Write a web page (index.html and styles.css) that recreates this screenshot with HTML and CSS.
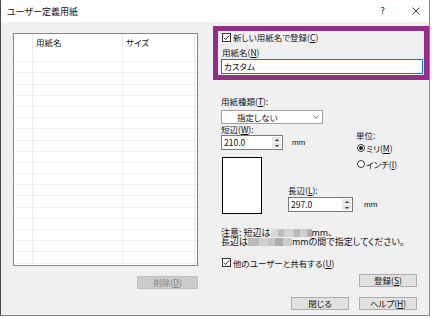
FILE: index.html
```html
<!DOCTYPE html>
<html lang="ja">
  <head>
    <meta charset="UTF-8" />
    <title>ユーザー定義用紙</title>
    <link rel="stylesheet" href="styles.css">
  </head>
  <body>
    <div class="window">
      <div class="titlebar">
        <span class="title">ユーザー定義用紙</span>
        <span class="title-btns">
          <span class="help-btn">?</span>
          <svg class="close-btn" width="8" height="8" viewBox="0 0 8 8">
            <path d="M0.5 0.5 L7.5 7.5 M7.5 0.5 L0.5 7.5" stroke="#222" stroke-width="0.9" fill="none" />
          </svg>
        </span>
      </div>

      <div class="dialog">
        <div class="left-pane">
          <div class="paper-list">
            <div class="list-head"><span></span><span>用紙名</span><span>サイズ</span></div>
            <div class="list-row"><span></span><span></span><span></span></div>
            <div class="list-row"><span></span><span></span><span></span></div>
            <div class="list-row"><span></span><span></span><span></span></div>
            <div class="list-row"><span></span><span></span><span></span></div>
            <div class="list-row"><span></span><span></span><span></span></div>
            <div class="list-row"><span></span><span></span><span></span></div>
            <div class="list-row"><span></span><span></span><span></span></div>
            <div class="list-row"><span></span><span></span><span></span></div>
            <div class="list-row"><span></span><span></span><span></span></div>
            <div class="list-row"><span></span><span></span><span></span></div>
            <div class="list-row"><span></span><span></span><span></span></div>
            <div class="list-row"><span></span><span></span><span></span></div>
            <div class="list-row"><span></span><span></span><span></span></div>
            <div class="list-row"><span></span><span></span><span></span></div>
            <div class="list-row"><span></span><span></span><span></span></div>
            <div class="list-row"><span></span><span></span><span></span></div>
            <div class="list-row"><span></span><span></span><span></span></div>
            <div class="list-row"><span></span><span></span><span></span></div>
            <div class="list-row"><span></span><span></span><span></span></div>
          </div>
          <button class="btn btn-delete" disabled>削除(<u>D</u>)</button>
        </div>

        <div class="right-pane">
          <div class="highlight">
            <div class="check">
              <svg class="checkbox" width="9" height="9" viewBox="0 0 9 9">
                <rect x="0.5" y="0.5" width="8" height="8" fill="#fff" stroke="#333" />
                <path d="M1.8 4.6 L3.6 6.5 L7.2 2.4" stroke="#111" stroke-width="0.9" fill="none" />
              </svg>
              <span>新しい用紙名で登録(<u>C</u>)</span>
            </div>
            <div class="name-label">用紙名(<u>N</u>)</div>
            <div class="textbox">カスタム</div>
          </div>

          <div class="form">
            <div class="type-label">用紙種類(<u>T</u>):</div>
            <div class="combo">
              <span>指定しない</span>
              <svg class="chevron" width="6" height="4" viewBox="0 0 6 4">
                <path d="M0.5 0.8 L3 3.2 L5.5 0.8" stroke="#444" stroke-width="0.8" fill="none" />
              </svg>
            </div>

            <div class="size-grid">
              <div class="short-label">短辺(<u>W</u>):</div>
              <div class="short-row">
                <div class="spin spin-short">
                  <span class="spin-text">210.0</span>
                  <span class="spin-btns"><span class="up"></span><span class="down"></span></span>
                </div>
                <span class="mm">mm</span>
              </div>

              <div class="unit-group">
                <div class="unit-label">単位:</div>
                <div class="radio">
                  <svg width="8" height="8" viewBox="0 0 8 8">
                    <circle cx="4" cy="4" r="3.5" fill="#fff" stroke="#333" />
                    <circle cx="4" cy="4" r="2" fill="#222" />
                  </svg>
                  <span>ミリ(<u>M</u>)</span>
                </div>
                <div class="radio">
                  <svg width="8" height="8" viewBox="0 0 8 8">
                    <circle cx="4" cy="4" r="3.5" fill="#fff" stroke="#333" />
                  </svg>
                  <span>インチ(<u>I</u>)</span>
                </div>
              </div>

              <div class="preview"></div>

              <div class="long-block">
                <div class="long-label">長辺(<u>L</u>):</div>
                <div class="long-row">
                  <div class="spin spin-long">
                    <span class="spin-text">297.0</span>
                    <span class="spin-btns"><span class="up"></span><span class="down"></span></span>
                  </div>
                  <span class="mm mm-long">mm</span>
                </div>
              </div>
            </div>

            <p class="note">
              注意: 短辺は<span class="masked masked-1"></span>mm、<br>
              長辺は<span class="masked masked-2"></span>mmの間で指定してください。
            </p>

            <div class="check share">
              <svg class="checkbox" width="9" height="9" viewBox="0 0 9 9">
                <rect x="0.5" y="0.5" width="8" height="8" fill="#fff" stroke="#333" />
                <path d="M1.8 4.6 L3.6 6.5 L7.2 2.4" stroke="#111" stroke-width="0.9" fill="none" />
              </svg>
              <span>他のユーザーと共有する(<u>U</u>)</span>
            </div>

            <div class="btn-row register-row">
              <button class="btn">登録(<u>S</u>)</button>
            </div>
            <div class="btn-row footer-row">
              <button class="btn">閉じる</button>
              <button class="btn">ヘルプ(<u>H</u>)</button>
            </div>
          </div>
        </div>
      </div>
    </div>
  </body>
</html>
```

FILE: styles.css
```css
body {
  background-color: #fff;
  color: #111;
  font-family: "Noto Sans CJK JP", "Noto Sans", sans-serif;
  font-feature-settings: "palt";
  font-size: 8.5px;
  margin: 0;
}
u {
  text-decoration-thickness: 1px;
  text-underline-offset: 1px;
}
.window {
  background-color: #f0f0f0;
  border: 1px solid #868686;
  border-left-color: #4a4a4a;
  border-top: none;
  box-sizing: border-box;
  height: 316px;
  width: 430px;
}
.titlebar {
  align-items: center;
  background-color: #fff;
  display: flex;
  height: 22px;
  justify-content: space-between;
}
.title {
  font-size: 9px;
  margin-left: 6px;
  margin-top: 1px;
}
.title-btns {
  align-items: center;
  display: flex;
  margin-right: 9px;
}
.help-btn {
  color: #222;
  font-family: "DejaVu Sans", sans-serif;
  font-size: 9px;
  margin-right: 27px;
}
.close-btn {
  display: block;
}
.dialog {
  display: flex;
  padding: 4px 0 0 12px;
}
.left-pane {
  align-items: flex-end;
  display: flex;
  flex-direction: column;
  margin-top: 7px;
  width: 185px;
}
.paper-list {
  background-color: #fff;
  border: 1px solid #828790;
  box-sizing: border-box;
  height: 233px;
  overflow: hidden;
  width: 185px;
}
.list-head,
.list-row {
  display: grid;
  grid-template-columns: 19px 90px 72px;
}
.list-head {
  height: 17px;
  line-height: 17px;
}
.list-head span {
  border-right: 1px solid #e5e5e5;
  box-sizing: border-box;
  padding-left: 3px;
}
.list-row {
  border-bottom: 1px solid #efefef;
  box-sizing: border-box;
  height: 11.2px;
}
.list-row span {
  border-right: 1px solid #efefef;
  box-sizing: border-box;
}
.btn {
  background-color: #e1e1e1;
  border: 1px solid #adadad;
  color: #111;
  font-family: inherit;
  font-feature-settings: "palt";
  font-size: 8.5px;
  height: 13px;
  line-height: 11px;
  padding: 0;
  width: 58px;
}
.btn-delete {
  background-color: #cccccc;
  border-color: #bfbfbf;
  color: #838383;
  margin-top: 10px;
  width: 61px;
}
.right-pane {
  margin-left: 15px;
  width: 217px;
}
.highlight {
  border: 5px solid #992a8b;
  box-sizing: border-box;
  height: 54px;
}
.check {
  align-items: center;
  display: flex;
  height: 12px;
  margin-left: 4px;
}
.checkbox {
  display: block;
  margin-right: 2px;
}
.name-label {
  line-height: 11px;
  margin: 4px 0 0 4px;
}
.textbox {
  background-color: #fff;
  border: 1px solid #0078d7;
  box-sizing: border-box;
  height: 15px;
  line-height: 13px;
  margin: 1px 0 0 3px;
  padding-left: 2px;
  width: 202px;
}
.form {
  padding: 0 12px 0 8px;
}
.type-label {
  line-height: 12px;
  margin-top: 15px;
}
.combo {
  align-items: center;
  background-color: #fff;
  border: 1px solid #a0a0a0;
  box-sizing: border-box;
  display: flex;
  height: 14px;
  justify-content: space-between;
  margin-top: 3px;
  padding: 0 3px 0 15px;
  width: 102px;
}
.chevron {
  display: block;
}
.size-grid {
  display: grid;
  grid-template-columns: 67px 68px 1fr;
  grid-template-rows: 10px 16px 35px 28px;
}
.short-label {
  grid-column: 1 / 3;
  grid-row: 1;
  line-height: 10px;
}
.short-row {
  align-items: center;
  display: flex;
  grid-column: 1 / 3;
  grid-row: 2;
  margin-top: 1px;
}
.spin {
  background-color: #fff;
  border: 1px solid #7a7a7a;
  box-sizing: border-box;
  display: flex;
  height: 15px;
}
.spin-short {
  width: 62px;
}
.spin-long {
  width: 65px;
}
.spin-text {
  flex: 1;
  line-height: 13px;
  padding-left: 2px;
}
.spin-btns {
  display: flex;
  flex-direction: column;
  gap: 1px;
  padding: 1px;
  width: 9px;
}
.spin-btns span {
  align-items: center;
  background-color: #e6e6e6;
  display: flex;
  flex: 1;
  justify-content: center;
}
.spin-btns .up::after,
.spin-btns .down::after {
  border-left: 2px solid transparent;
  border-right: 2px solid transparent;
  content: "";
}
.spin-btns .up::after {
  border-bottom: 2px solid #333;
}
.spin-btns .down::after {
  border-top: 2px solid #333;
}
.mm {
  font-family: "Liberation Sans", sans-serif;
  font-size: 8px;
  margin-left: 9px;
}
.mm-long {
  margin-left: 11px;
}
.unit-group {
  grid-column: 3;
  grid-row: 1 / 4;
  padding-top: 6px;
}
.unit-label {
  line-height: 10px;
}
.radio {
  align-items: center;
  display: flex;
  height: 16px;
  margin-left: 1px;
}
.radio:first-of-type {
  margin-top: 2px;
}
.radio svg {
  display: block;
  margin-right: 1px;
}
.preview {
  background-color: #fff;
  border: 1px solid #000;
  box-sizing: border-box;
  grid-column: 1;
  grid-row: 3 / 5;
  height: 57px;
  margin: 7px 0 0 1px;
  width: 40px;
}
.long-block {
  grid-column: 2 / 4;
  grid-row: 4;
}
.long-label {
  line-height: 10px;
}
.long-row {
  align-items: center;
  display: flex;
  margin-top: 2px;
}
.note {
  font-size: 9px;
  line-height: 9px;
  margin: 15px 0 0;
}
.masked {
  display: inline-block;
  height: 8px;
  vertical-align: -1px;
}
.masked-1 {
  background: linear-gradient(90deg, #d6d6d6 0 18%, #bdbdbd 18% 32%, #d2d2d2 32% 55%, #b8b8b8 55% 70%, #cfcfcf 70% 88%, #b0b0b0 88%);
  width: 41px;
}
.masked-2 {
  background: linear-gradient(90deg, #b9b9b9 0 25%, #d0d0d0 25% 45%, #c5c5c5 45% 62%, #adadad 62% 80%, #cccccc 80%);
  width: 44px;
}
.share {
  height: 11px;
  margin: 11px 0 0 1px;
}
.btn-row {
  display: flex;
  gap: 10px;
  justify-content: flex-end;
}
.register-row {
  margin-top: 6px;
}
.footer-row {
  margin-top: 10px;
}
```
